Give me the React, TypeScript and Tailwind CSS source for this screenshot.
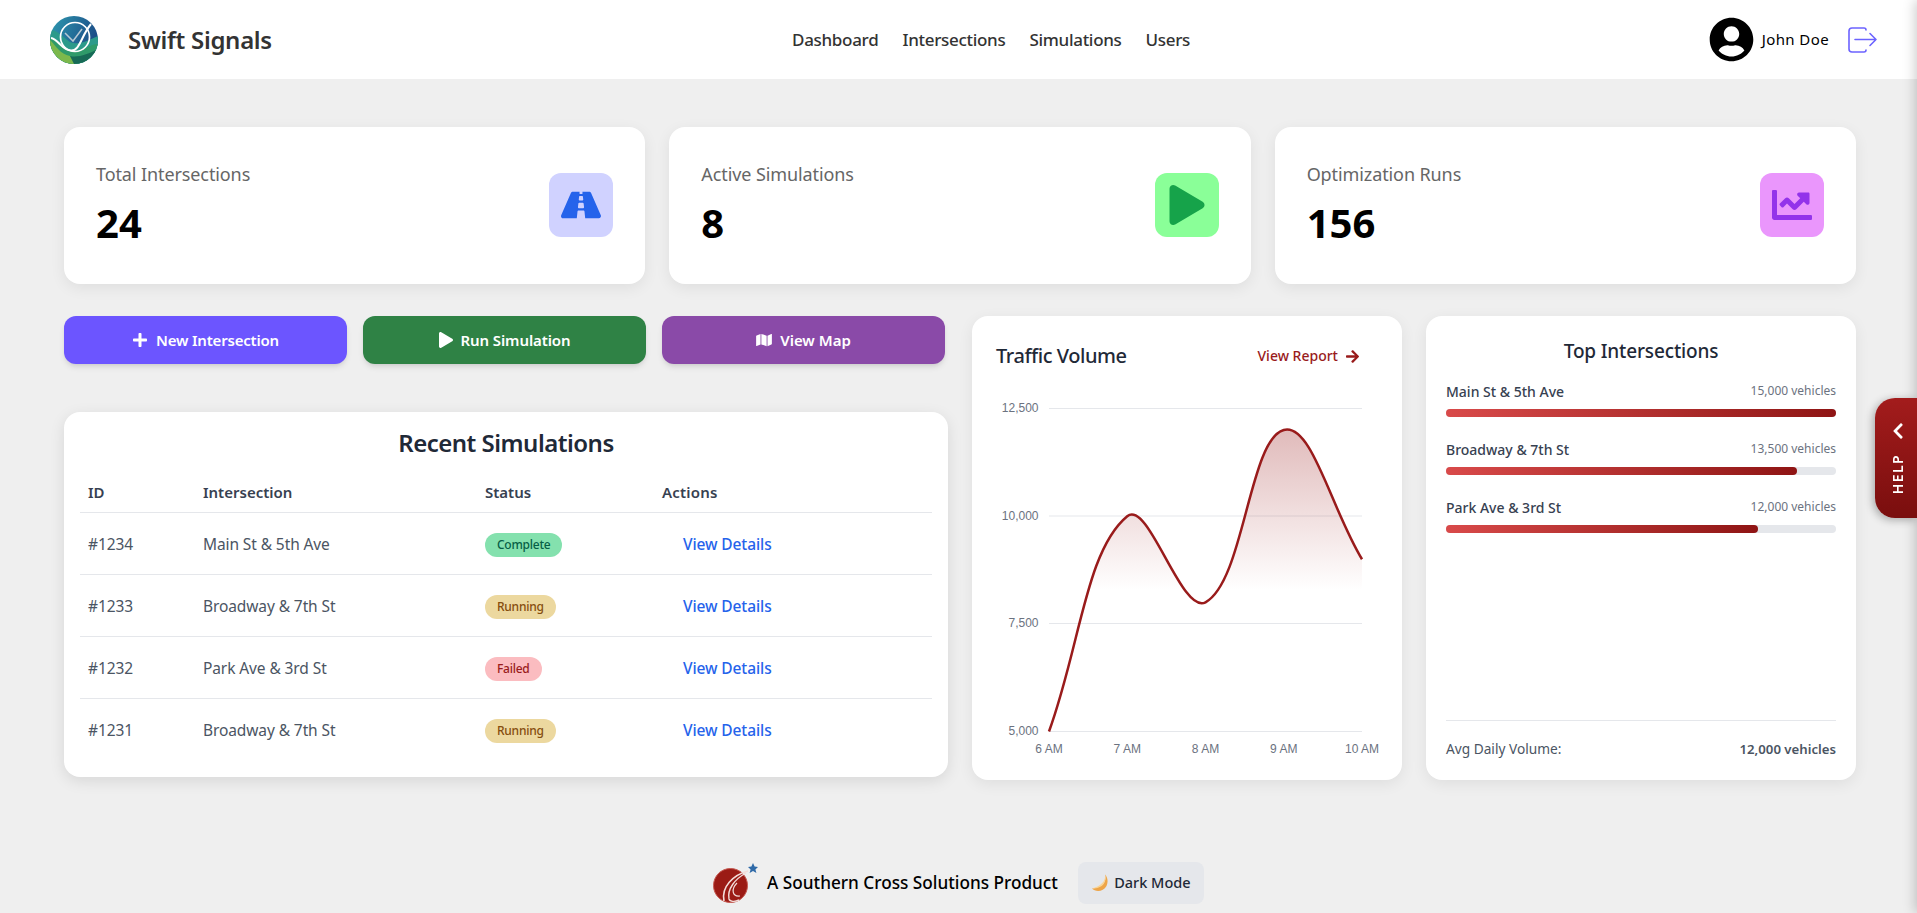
import React from "react";
import { FaRoad, FaPlay, FaChartLine, FaPlus, FaMap, FaChevronLeft, FaArrowRight, FaUserCircle } from "react-icons/fa";

function SwiftLogo() {
  return (
    <svg width="48" height="48" viewBox="0 0 48 48" className="shrink-0">
      <defs>
        <clipPath id="swiftClip"><circle cx="24" cy="24" r="24" /></clipPath>
        <linearGradient id="swiftTop" x1="0" y1="0" x2="1" y2="0.4">
          <stop offset="0" stopColor="#2f9bb0" />
          <stop offset="1" stopColor="#1b4a86" />
        </linearGradient>
      </defs>
      <g clipPath="url(#swiftClip)">
        <rect width="48" height="48" fill="url(#swiftTop)" />
        <path d="M0 14 C8 14 14 22 20 26 C30 30 38 24 48 20 V48 H0 Z" fill="#2c9a8a" />
        <path d="M0 22 C10 24 14 34 24 35 C34 35 40 28 48 28 V48 H0 Z" fill="#2f9a6a" />
        <path d="M0 24 C6 30 10 38 20 40 L26 48 H0 Z" fill="#7cb84c" />
        <path d="M20 40 C28 42 38 38 48 33 V48 H24 Z" fill="#176a56" />
        <circle cx="25" cy="21" r="14.5" fill="none" stroke="#fff" strokeWidth="1.7" />
        <path d="M1 22 C8 23 12 34 21 34.5 C30 35 31 20 41 8" fill="none" stroke="#fff" strokeWidth="2" />
        <path d="M15 17 L23 25 L32 13" fill="none" stroke="#b9c8d4" strokeWidth="1.5" />
      </g>
    </svg>
  );
}

function SouthernLogo() {
  return (
    <svg width="45" height="40" viewBox="0 0 45 40" className="shrink-0">
      <circle cx="17.5" cy="22.5" r="17" fill="#9b1b15" stroke="#c65a52" strokeWidth="1" />
      <path d="M35 8 C20 12 8 24 11 38" fill="none" stroke="#f3dcd9" strokeWidth="1.6" />
      <path d="M33 10 C22 16 14 26 16 36 C17 39 22 39 26 37" fill="none" stroke="#f3dcd9" strokeWidth="1.4" />
      <path d="M24 20 C18 26 19 34 27 33" fill="none" stroke="#f3dcd9" strokeWidth="1.2" />
      <path d="M40 0 L41.6 3.6 L45 4 L42.4 6.4 L43.4 10 L40 8 L36.6 10 L37.6 6.4 L35 4 L38.4 3.6 Z" fill="#2f6aa8" />
    </svg>
  );
}

function StatCard({ label, value, box, icon }: { label: string; value: string; box: string; icon: React.ReactNode }) {
  return (
    <div className="bg-white rounded-2xl shadow-[0_4px_15px_rgba(0,0,0,0.07)] h-[157px] px-8 flex items-center justify-between">
      <div className="flex flex-col">
        <span className="text-[18px] leading-[28px] text-[#666666] tracking-[-0.1px]">{label}</span>
        <span className="text-[40px] leading-[48px] font-bold text-black mt-[11px] mb-[5px]">{value}</span>
      </div>
      <div className={`w-16 h-16 mb-[1px] rounded-xl flex items-center justify-center ${box}`}>{icon}</div>
    </div>
  );
}

const rows = [
  { id: "#1234", name: "Main St & 5th Ave", status: "Complete", cls: "bg-[#84e1ae] text-[#065f46]" },
  { id: "#1233", name: "Broadway & 7th St", status: "Running", cls: "bg-[#ecd89f] text-[#854d0e]" },
  { id: "#1232", name: "Park Ave & 3rd St", status: "Failed", cls: "bg-[#fbbcc0] text-[#991b1b]" },
  { id: "#1231", name: "Broadway & 7th St", status: "Running", cls: "bg-[#ecd89f] text-[#854d0e]" },
];

const tops = [
  { name: "Main St & 5th Ave", count: "15,000 vehicles", w: "w-full" },
  { name: "Broadway & 7th St", count: "13,500 vehicles", w: "w-[90%]" },
  { name: "Park Ave & 3rd St", count: "12,000 vehicles", w: "w-[80%]" },
];

function curvePath(pts: [number, number][]) {
  const t = 0.4;
  const cps = pts.map((p, i) => {
    const prev = pts[i - 1] ?? p;
    const next = pts[i + 1] ?? p;
    const d01 = Math.hypot(p[0] - prev[0], p[1] - prev[1]);
    const d12 = Math.hypot(next[0] - p[0], next[1] - p[1]);
    const s = d01 + d12 || 1;
    const fa = (t * d01) / s;
    const fb = (t * d12) / s;
    return {
      a: [p[0] - fa * (next[0] - prev[0]), p[1] - fa * (next[1] - prev[1])],
      b: [p[0] + fb * (next[0] - prev[0]), p[1] + fb * (next[1] - prev[1])],
    };
  });
  let d = `M${pts[0][0]} ${pts[0][1]}`;
  for (let i = 1; i < pts.length; i++) {
    d += ` C${cps[i - 1].b[0]} ${cps[i - 1].b[1]} ${cps[i].a[0]} ${cps[i].a[1]} ${pts[i][0]} ${pts[i][1]}`;
  }
  return d;
}

function TrafficChart() {
  const xs = [1049, 1127.25, 1205.5, 1283.75, 1362];
  const vals = [5000, 10000, 8000, 12000, 9000];
  const yOf = (v: number) => 731.5 - ((v - 5000) / 7500) * 323;
  const pts = vals.map((v, i) => [xs[i], yOf(v)] as [number, number]);
  const line = curvePath(pts);
  const area = `${line} L1362 731.5 L1049 731.5 Z`;
  const grid: [string, number][] = [["12,500", 408.5], ["10,000", 516], ["7,500", 623.5], ["5,000", 731.5]];
  const xl = ["6 AM", "7 AM", "8 AM", "9 AM", "10 AM"];
  return (
    <svg viewBox="972 390 430 380" width="430" height="380" className="block">
      <defs>
        <linearGradient id="areaFill" gradientUnits="userSpaceOnUse" x1="0" y1="398" x2="0" y2="590">
          <stop offset="0" stopColor="#991b1b" stopOpacity="0.36" />
          <stop offset="1" stopColor="#991b1b" stopOpacity="0" />
        </linearGradient>
      </defs>
      {grid.map(([l, y]) => (
        <g key={l}>
          <line x1="1049" x2="1362" y1={y} y2={y} stroke="#e5e7eb" strokeWidth="1" />
          <text x="1038.5" y={y + 3.5} textAnchor="end" fontSize="12" fill="#6b7280" fontFamily="'Liberation Sans', sans-serif">{l}</text>
        </g>
      ))}
      <path d={area} fill="url(#areaFill)" />
      <path d={line} fill="none" stroke="#991b1b" strokeWidth="2.5" />
      {xl.map((l, i) => (
        <text key={l} x={xs[i]} y="753" textAnchor="middle" fontSize="12" fill="#6b7280" fontFamily="'Liberation Sans', sans-serif">{l}</text>
      ))}
    </svg>
  );
}

export default function App() {
  return (
    <div className="min-h-screen bg-[#efefef] font-['Noto_Sans','Open_Sans',sans-serif] overflow-hidden">
      <header className="h-[79px] bg-white flex items-center relative">
        <div className="flex items-center ml-[50px] w-[742px]">
          <SwiftLogo />
          <span className="ml-[30px] text-[24px] font-semibold text-[#333333] tracking-[-0.3px]">Swift Signals</span>
        </div>
        <nav className="flex gap-6 text-[17px] font-medium text-[#333333] tracking-[-0.3px]">
          <span>Dashboard</span>
          <span>Intersections</span>
          <span>Simulations</span>
          <span>Users</span>
        </nav>
        <div className="ml-auto flex items-center mr-[39px]">
          <FaUserCircle className="w-[45px] h-[45px] text-black" />
          <span className="ml-2 text-[15px] text-black tracking-[0.4px]">John Doe</span>
          <svg width="30" height="26" viewBox="0 0 30 26" fill="none" stroke="#6c63ff" strokeWidth="1.6" strokeLinecap="round" strokeLinejoin="round" className="ml-[19px]">
            <path d="M18 3V3a2 2 0 0 0-2-2H4a3 3 0 0 0-3 3v18a3 3 0 0 0 3 3h12a2 2 0 0 0 2-2" />
            <path d="M7 12.5H28M22 6.5l6 6-6 6" />
          </svg>
        </div>
      </header>

      <main className="w-[1792px] ml-16 pt-12">
        <section className="grid grid-cols-3 gap-6">
          <StatCard label="Total Intersections" value="24" box="bg-[#d0d2ff]" icon={<FaRoad className="w-[40px] h-[36px] text-[#2563eb]" />} />
          <StatCard label="Active Simulations" value="8" box="bg-[#8aff98]" icon={<FaPlay className="w-[40px] h-[40px] text-[#16a34a]" />} />
          <StatCard label="Optimization Runs" value="156" box="bg-[#ea96fc]" icon={<FaChartLine className="w-[40px] h-[40px] text-[#9333ea]" />} />
        </section>

        <section className="grid grid-cols-4 gap-6 mt-8">
          <div className="col-span-2 flex flex-col">
            <div className="grid grid-cols-3 gap-4 pr-[3px]">
              <button className="h-12 rounded-xl bg-[#6c55ff] text-white text-[15px] font-semibold shadow-md flex items-center justify-center gap-2 tracking-[-0.2px]">
                <FaPlus className="w-[16px] h-[16px]" />New Intersection
              </button>
              <button className="h-12 rounded-xl bg-[#2f8245] text-white text-[15px] font-semibold shadow-md flex items-center justify-center gap-2 tracking-[-0.1px]">
                <FaPlay className="w-[14px] h-[16px]" />Run Simulation
              </button>
              <button className="h-12 rounded-xl bg-[#8a4aa8] text-white text-[15px] font-semibold shadow-md flex items-center justify-center gap-2">
                <FaMap className="w-[16px] h-[14px]" />View Map
              </button>
            </div>

            <div className="mt-12 bg-white rounded-2xl shadow-[0_4px_15px_rgba(0,0,0,0.1)] px-4 pt-[15px] pb-[17px]">
              <h2 className="text-[24px] leading-8 font-semibold text-[#1f2937] text-center mb-[15px] tracking-[-0.5px]">Recent Simulations</h2>
              <table className="w-full table-fixed text-left">
                <colgroup>
                  <col className="w-[115px]" />
                  <col className="w-[282px]" />
                  <col className="w-[177px]" />
                  <col />
                </colgroup>
                <thead>
                  <tr className="h-[38px] border-b border-[#e5e7eb] text-[15px] font-semibold text-[#374151]">
                    <th className="px-2 pb-[2px] font-semibold">ID</th>
                    <th className="px-2 pb-[2px] font-semibold">Intersection</th>
                    <th className="px-2 pb-[2px] font-semibold">Status</th>
                    <th className="px-2 pb-[2px] font-semibold tracking-[0.2px]">Actions</th>
                  </tr>
                </thead>
                <tbody>
                  {rows.map((r, i) => (
                    <tr key={r.id} className={`h-[62px] text-[15.5px] text-[#4b5563] tracking-[-0.1px] ${i < 3 ? "border-b border-[#e5e7eb]" : ""}`}>
                      <td className="px-2 pt-[3px]">{r.id}</td>
                      <td className="px-2 pt-[3px]">{r.name}</td>
                      <td className="px-2 pt-[3px]">
                        <span className={`inline-flex items-center h-6 px-3 rounded-full text-[12px] font-medium tracking-[-0.25px] ${r.cls}`}>{r.status}</span>
                      </td>
                      <td className="px-2 pt-[3px]">
                        <span className="ml-[21px] text-[15.5px] font-medium text-[#2563eb]">View Details</span>
                      </td>
                    </tr>
                  ))}
                </tbody>
              </table>
            </div>
          </div>

          <div className="bg-white rounded-2xl shadow-[0_4px_15px_rgba(0,0,0,0.07)] h-[464px] flex flex-col overflow-hidden">
            <div className="h-[74px] px-6 pt-[26px] flex items-start justify-between">
              <h3 className="text-[20px] leading-7 font-medium text-[#1f2937] tracking-[-0.45px]">Traffic Volume</h3>
              <span className="flex items-center gap-[8px] text-[14px] leading-7 font-medium text-[#991b1b] mr-[19px]">
                View Report <FaArrowRight className="w-[13px] h-[15px]" />
              </span>
            </div>
            <TrafficChart />
          </div>

          <div className="bg-white rounded-2xl shadow-[0_4px_15px_rgba(0,0,0,0.07)] h-[464px] px-5 flex flex-col">
            <h3 className="text-[19px] leading-7 font-medium text-[#1f2937] text-center mt-[21px] tracking-[-0.15px]">Top Intersections</h3>
            <div className="flex flex-col gap-[22px] mt-[16px]">
              {tops.map((t) => (
                <div key={t.name}>
                  <div className="flex items-center justify-between h-[20px]">
                    <span className="text-[14px] font-medium text-[#374151]">{t.name}</span>
                    <span className="text-[12px] text-[#6b7280]">{t.count}</span>
                  </div>
                  <div className="h-2 mt-2 rounded-full bg-[#e5e7eb]">
                    <div className={`h-2 rounded-full bg-gradient-to-r from-[#d94a4a] to-[#8f1414] ${t.w}`} />
                  </div>
                </div>
              ))}
            </div>
            <div className="mt-auto mb-[21px] border-t border-[#e5e7eb] pt-[18px] flex items-center justify-between leading-5">
              <span className="text-[13.7px] text-[#4b5563]">Avg Daily Volume:</span>
              <span className="text-[13.2px] font-semibold text-[#4b5563]">12,000 vehicles</span>
            </div>
          </div>
        </section>
      </main>

      <footer className="mt-[82px] flex items-center justify-center">
        <SouthernLogo />
        <span className="ml-[9px] text-[17.2px] font-medium text-black">A Southern Cross Solutions Product</span>
        <button className="ml-[20px] h-[42px] w-[126px] rounded-lg bg-[#e5e7eb] flex items-center justify-center gap-[5px] text-[14.5px] font-medium text-[#1f2937]">
          <svg width="18" height="18" viewBox="0 0 18 18">
            <path d="M14 0.5 C16 7 12 13 1 14.5 C4 18 12 18.5 15.5 12 C17.5 8 16.5 3 14 0.5 Z" fill="#eea548" />
            <path d="M14 0.5 C15 7 10 12 1 14.5 C7 14.5 11.5 12.5 13.5 8.5 C14.8 5.5 14.8 3 14 0.5 Z" fill="#f9d596" />
          </svg>
          Dark Mode
        </button>
      </footer>

      <div className="fixed top-0 left-[1917px] w-[300px] h-screen shadow-[-2px_0_12px_rgba(0,0,0,0.2)] bg-white" />

      <div className="fixed right-0 top-[398px] w-[42px] h-[120px] rounded-l-[20px] bg-gradient-to-b from-[#a31c1c] to-[#7a0e0e] shadow-[-2px_2px_8px_rgba(0,0,0,0.3)] flex flex-col items-center text-white pt-[24px] pl-[3px]">
        <FaChevronLeft className="w-[18px] h-[18px]" />
        <span className="mt-[14px] [writing-mode:vertical-rl] rotate-180 text-[14px] font-semibold tracking-[0.1em]">HELP</span>
      </div>
    </div>
  );
}
